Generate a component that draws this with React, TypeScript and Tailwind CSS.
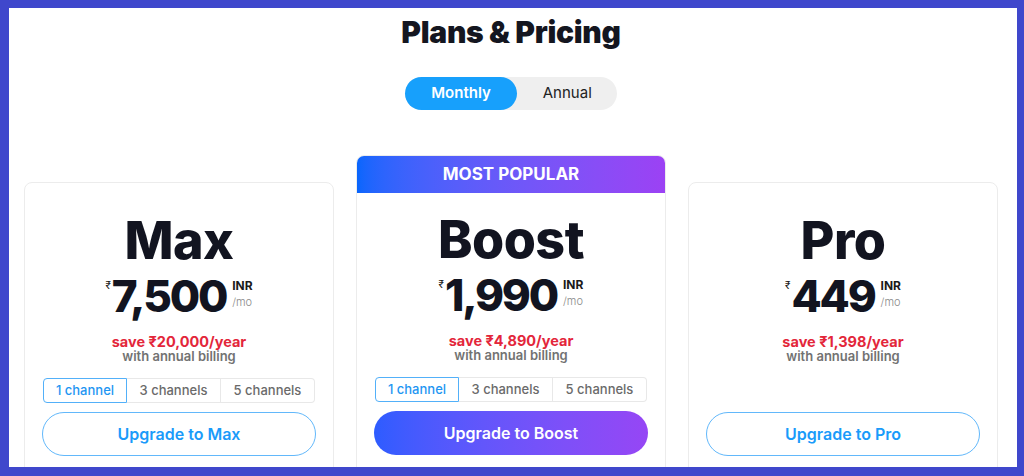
import React from "react";

type Plan = {
  name: string;
  price: string;
  save: string;
  channels: boolean;
  popular?: boolean;
};

const plans: Plan[] = [
  { name: "Max", price: "7,500", save: "save ₹20,000/year", channels: true },
  { name: "Boost", price: "1,990", save: "save ₹4,890/year", channels: true, popular: true },
  { name: "Pro", price: "449", save: "save ₹1,398/year", channels: false },
];

function Card({ plan }: { plan: Plan }) {
  return (
    <div
      className={
        "w-[310px] flex flex-col rounded-[8px] border border-[#ececec] bg-white overflow-hidden " +
        (plan.popular ? "" : "mt-[27px]")
      }
    >
      {plan.popular && (
        <div className="h-[38px] -mx-px -mt-px flex items-center justify-center bg-linear-to-r from-[#0466fd] to-[#9c41f4] rounded-t-[7px] text-white text-[17px] font-bold leading-none">
          MOST POPULAR
        </div>
      )}
      <div className={"px-[17px] pb-[40px] flex flex-col items-center " + (plan.popular ? "pt-[21px]" : "pt-[32px]")}>
        <div className="text-[52px] leading-[52px] font-extrabold tracking-[-0.01em] text-[#121420]">
          {plan.name}
        </div>
        <div className="mt-[7px] flex items-start justify-center">
          <span className="mt-[6px] mr-[1px] text-[10px] leading-none text-[#222]">₹</span>
          <span className="text-[44px] leading-[44px] font-extrabold tracking-[-0.05em] text-[#121420]">
            {plan.price}
          </span>
          <div className="ml-[6px] mt-[6px] flex flex-col items-start">
            <span className="text-[12px] leading-none font-bold text-[#1a1a1a]">INR</span>
            <span className="mt-[5px] text-[11px] leading-none font-light text-[#8a8a8a]">/mo</span>
          </div>
        </div>
        <div className="mt-[17px] text-[14.5px] leading-[14px] font-bold text-[#e3263a]">{plan.save}</div>
        <div className="text-[13px] leading-[15px] font-semibold text-[#727272]">with annual billing</div>
        {plan.channels ? (
          <div className="mt-[14px] flex h-[25px] text-[13px] font-medium">
            <div className="w-[84px] flex items-center justify-center border border-[#52b0f9] rounded-l-[4px] text-[#1e96f2]">
              1 channel
            </div>
            <div className="w-[94px] flex items-center justify-center border-y border-r border-[#e8e8e8] text-[#6a6a6a]">
              3 channels
            </div>
            <div className="w-[94px] flex items-center justify-center border-y border-r border-[#e8e8e8] rounded-r-[4px] text-[#6a6a6a]">
              5 channels
            </div>
          </div>
        ) : (
          <div className="mt-[14px] h-[25px]" />
        )}
        {plan.popular ? (
          <button className="mt-[9px] h-[44px] w-full rounded-full bg-linear-to-r from-[#2d5cff] to-[#9646f5] text-white text-[16px] font-semibold">
            Upgrade to {plan.name}
          </button>
        ) : (
          <button className="mt-[9px] h-[44px] w-full rounded-full border border-[#62b8fb] bg-white text-[#1a9bfa] text-[16px] font-semibold">
            Upgrade to {plan.name}
          </button>
        )}
      </div>
    </div>
  );
}

export default function App() {
  return (
    <div className="w-[1024px] h-[476px] overflow-hidden bg-[#3f47cc] font-['Inter',sans-serif]">
      <div className="h-full border-l-[9px] border-t-[8px] border-r-[7px] border-b-[9px] border-[#3f47cc] bg-white overflow-hidden">
        <div className="ml-[15px] w-[974px] flex flex-col items-center pt-[6px]">
          <h1 className="text-[30px] leading-[36px] font-black tracking-[-0.01em] text-[#141620]">
            Plans &amp; Pricing
          </h1>
          <div className="mt-[27px] flex h-[33px] rounded-full bg-[#efefef]">
            <button className="h-[33px] px-[26px] rounded-full bg-[#17a0fc] text-white text-[15px] font-semibold">
              Monthly
            </button>
            <button className="h-[33px] pl-[26px] pr-[25px] rounded-full text-[#222] text-[15px]">Annual</button>
          </div>
          <div className="mt-[45px] w-full flex items-start justify-between">
            {plans.map((p) => (
              <Card key={p.name} plan={p} />
            ))}
          </div>
        </div>
      </div>
    </div>
  );
}
